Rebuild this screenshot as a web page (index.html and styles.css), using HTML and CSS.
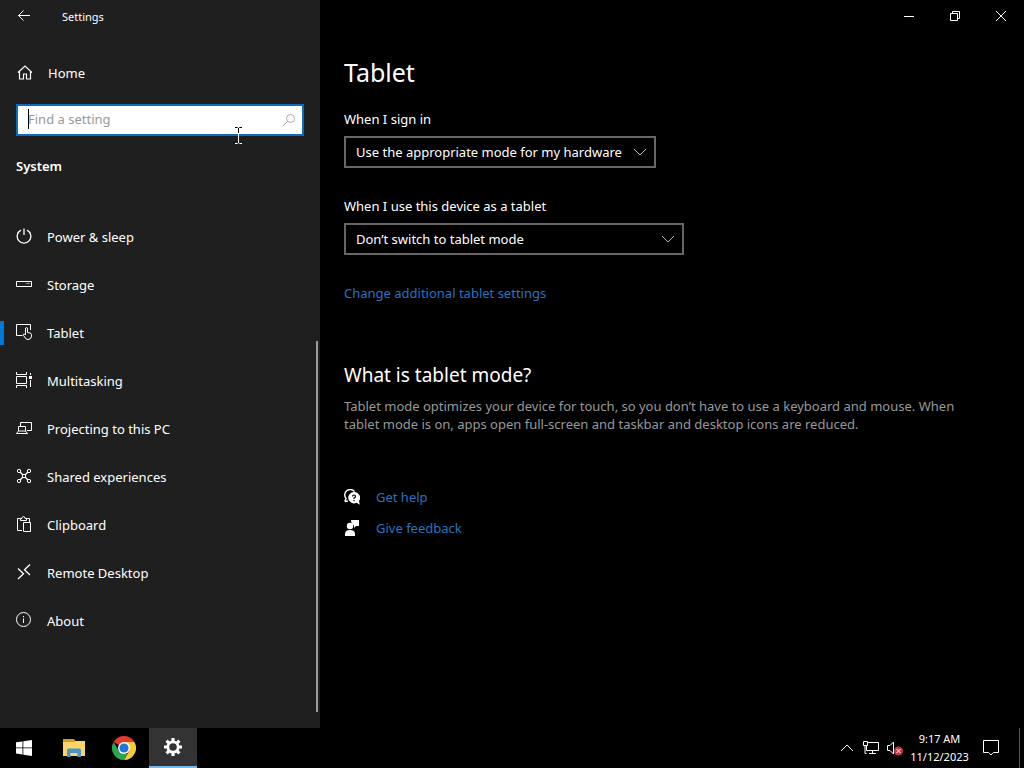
FILE: index.html
```html
<!DOCTYPE html>
<html lang="en">
<head>
    <meta charset="UTF-8">
    <meta name="viewport" content="width=device-width, initial-scale=1.0">
    <title>Settings</title>
    <link rel="stylesheet" href="styles.css">
</head>
<body>
    <div class="window">
        <aside class="sidebar">
            <header class="titlebar">
                <button class="back" aria-label="Back">
                    <svg class="icon" viewBox="0 0 16 16"><path d="M14 7.5H2.5M7.5 2.5l-5 5 5 5"/></svg>
                </button>
                <span class="app-name">Settings</span>
            </header>
            <a class="nav-item home" href="#">
                <svg class="icon" viewBox="0 0 16 16"><path d="M2 8.500l7-6.500 7 6.500M3.500 7v8h4v-5h3v5h4V7" stroke-width="1.200"/></svg>
                Home
            </a>
            <div class="search">
                <span class="caret"></span>
                <input type="text" placeholder="Find a setting" aria-label="Find a setting">
                <svg class="icon search-icon" viewBox="0 0 16 16"><circle cx="9.5" cy="6.5" r="4"/><path d="M6.5 9.5L2 14"/></svg>
                <svg class="pointer" viewBox="0 0 9 17"><path d="M1 .5h2.5l1 1 1-1H8M4.5 1v15M1 16.5h2.5l1-1 1 1H8" stroke="#fff"/><path d="M1 .5h2.5l1 1 1-1H8M4.5 1v5" stroke="#000"/></svg>
            </div>
            <h2 class="section">System</h2>
            <nav>
                <a class="nav-item" href="#">
                    <svg class="icon" viewBox="0 0 16 16"><path d="M5 2.2a6.8 6.8 0 1 0 6 0M8 .5V7" stroke-width="1.3"/></svg>
                    Power &amp; sleep
                </a>
                <a class="nav-item" href="#">
                    <svg class="icon" viewBox="0 0 16 16"><path d="M.5 5.5h15v5H.5zM10.500 7.5h1M12.500 7.5h1"/></svg>
                    Storage
                </a>
                <a class="nav-item active" href="#">
                    <svg class="icon" viewBox="0 0 16 16"><path d="M6.5 11.5h-6v-11h14V6M9.5 11V5q0-1.500 1-1.500t1 1.500v3.500l2.500.5q1.500.3 1.500 1.700V12q0 3.500-3.500 3.500-2 0-2.700-1.500L7.500 11.500q-.5-1.500.5-1.500.8 0 1.500 1"/></svg>
                    Tablet
                </a>
                <a class="nav-item" href="#">
                    <svg class="icon" viewBox="0 0 16 16"><path d="M.5 0v2.500h10V0M.5 4.5h10v7H.5zM.5 16v-2.500h10V16M14.500 1v2M14.500 8v7"/><rect class="solid" x="13" y="4" width="3" height="3"/></svg>
                    Multitasking
                </a>
                <a class="nav-item" href="#">
                    <svg class="icon" viewBox="0 0 16 16"><path d="M4.500 6V2.500h11v8H11M2.500 11V6.500h7V11M.5 13.500L2.500 11h7l2 2.500z"/></svg>
                    Projecting to this PC
                </a>
                <a class="nav-item" href="#">
                    <svg class="icon" viewBox="0 0 16 16"><path d="M4 4l8 8M12 4l-8 8" stroke-width="1.400"/><circle class="hub" cx="8" cy="8" r="1.700"/><circle class="hub" cx="3" cy="3" r="1.700"/><circle class="hub" cx="13" cy="3" r="1.700"/><circle class="hub" cx="3" cy="13" r="1.700"/><circle class="hub" cx="13" cy="13" r="1.700"/></svg>
                    Shared experiences
                </a>
                <a class="nav-item" href="#">
                    <svg class="icon" viewBox="0 0 16 16"><path d="M6 14.500H1.500v-12h3M10.500 2.500h3V6M4.500 4.500v-2H6Q6 .5 7.500.5T9 2.500h1.500v2zM7.500 6.500h7v9h-7z"/></svg>
                    Clipboard
                </a>
                <a class="nav-item" href="#">
                    <svg class="icon" viewBox="0 0 16 16"><path d="M2 4.500l5.500 5.200L2 15M14 .5L8.500 5.700 14 11" stroke-width="1.300"/></svg>
                    Remote Desktop
                </a>
                <a class="nav-item" href="#">
                    <svg class="icon" viewBox="0 0 16 16"><circle cx="7.500" cy="7.500" r="7"/><path d="M7.500 6.500V11M7.500 4v1.200"/></svg>
                    About
                </a>
            </nav>
            <div class="scroll-thumb"></div>
        </aside>

        <div class="content">
            <div class="window-controls">
                <button aria-label="Minimize"><svg viewBox="0 0 10 10"><path d="M0 5.500h10"/></svg></button>
                <button aria-label="Restore"><svg viewBox="0 0 10 10"><path d="M.5 2.500h7v7h-7zM2.500 2V.5h7v7H8"/></svg></button>
                <button aria-label="Close"><svg viewBox="0 0 10 10"><path d="M0 0l10 10M10 0L0 10"/></svg></button>
            </div>
            <main>
                <h1>Tablet</h1>
                <div class="field">
                    <label for="sign-in">When I sign in</label>
                    <div class="select-box">
                        <select id="sign-in">
                            <option>Use the appropriate mode for my hardware</option>
                            <option>Always use tablet mode</option>
                            <option>Never use tablet mode</option>
                        </select>
                        <svg viewBox="0 0 12 8"><path d="M0 1l6 6 6-6"/></svg>
                    </div>
                </div>
                <div class="field">
                    <label for="as-tablet">When I use this device as a tablet</label>
                    <div class="select-box wide">
                        <select id="as-tablet">
                            <option>Don’t switch to tablet mode</option>
                            <option>Always switch to tablet mode</option>
                            <option>Ask me before switching modes</option>
                        </select>
                        <svg viewBox="0 0 12 8"><path d="M0 1l6 6 6-6"/></svg>
                    </div>
                </div>
                <a class="link" href="#">Change additional tablet settings</a>
                <section class="about">
                    <h2>What is tablet mode?</h2>
                    <p>Tablet mode optimizes your device for touch, so you don’t have to use a keyboard and mouse. When tablet mode is on, apps open full-screen and taskbar and desktop icons are reduced.</p>
                </section>
                <ul class="support">
                    <li>
                        <svg class="icon" viewBox="0 0 16 16"><path d="M.8 12.500L2 9.500A5 5 0 1 1 10.500 2.500M.8 12.500l3.200-.5" stroke-width="1.400"/><path class="solid" d="M10 3a5.700 5.700 0 1 0 2.500 10.800l3.300 2-.8-3.800A5.700 5.700 0 0 0 10 3z"/><path d="M8.500 7.500Q8.500 6 10 6t1.500 1.300T10 9v1M10 11v1.200" stroke="#000" stroke-width="1.200"/></svg>
                        <a class="link" href="#">Get help</a>
                    </li>
                    <li>
                        <svg class="icon" viewBox="0 0 16 16"><circle class="solid" cx="6" cy="6" r="3.200"/><path class="solid" d="M1 16v-2q0-4 5-4t5 4v2zM7 0h8v6h-3l-2 2V5.500L7.500 3z"/></svg>
                        <a class="link" href="#">Give feedback</a>
                    </li>
                </ul>
            </main>
        </div>
    </div>

    <footer class="taskbar">
        <button class="task" aria-label="Start">
            <svg width="16" height="16" viewBox="0 0 16 16"><path fill="#fff" d="M0 2.300L6.500 1.400v6.100H0zM7.300 1.300L16 0v7.500H7.300zM0 8.300h6.500v6.200L0 13.600zM7.300 8.300H16V16l-8.700-1.300z"/></svg>
        </button>
        <button class="task" aria-label="File Explorer">
            <svg width="22" height="18" viewBox="0 0 22 18"><path fill="#d89a25" d="M0 0h11l1.500 2H22v4H0z"/><path fill="#fbd568" d="M0 3h11l1.500-1H22v15H0z"/><path fill="#4a93c4" d="M4 18v-7q0-1.500 1.500-1.500h11Q18 9.500 18 11v7h-3.500v-4h-7v4z"/></svg>
        </button>
        <button class="task" aria-label="Google Chrome">
            <svg width="24" height="24" viewBox="0 0 24 24"><path fill="#e33b2e" d="M12 12L1.600 6A12 12 0 0 1 22.400 6z"/><path fill="#fcc934" d="M12 6h10.400A12 12 0 0 1 12 24l5.200-9z"/><path fill="#2da44e" d="M1.600 6l5.200 9L12 18l3.500-.5L12 24A12 12 0 0 1 1.600 6z"/><circle cx="12" cy="12" r="6" fill="#fff"/><circle cx="12" cy="12" r="4.600" fill="#2374e1"/></svg>
        </button>
        <button class="task current" aria-label="Settings">
            <svg width="18" height="18" viewBox="0 0 18 18"><circle cx="9" cy="9" r="5.200" fill="none" stroke="#fff" stroke-width="2.800"/><path d="M9 0v3M9 15v3M0 9h3M15 9h3M2.600 2.600l2.200 2.200M13.200 13.200l2.200 2.200M2.600 15.400l2.200-2.200M13.200 4.800l2.200-2.200" stroke="#fff" stroke-width="3.200"/></svg>
        </button>
        <div class="tray">
            <button aria-label="Show hidden icons"><svg class="chevron" viewBox="0 0 12 8"><path d="M0 7l6-6 6 6"/></svg></button>
            <button aria-label="Network"><svg class="icon" viewBox="0 0 16 16"><path d="M5 2.500h10.500v8h-12V6M9.500 10.500v3M6 13.500h7M.5 1.500h4v4h-4zM2 5.500v8h1.500"/></svg></button>
            <button aria-label="Volume muted"><svg class="icon" viewBox="0 0 16 16"><path d="M.5 5.500H3L6.500 2v12L3 10.500H.5z"/><circle cx="11.500" cy="11" r="4.500" fill="#c93442" stroke="none"/><path d="M9.500 9l4 4M13.500 9l-4 4"/></svg></button>
            <div class="clock"><span>9:17 AM</span><span>11/12/2023</span></div>
            <button class="notify" aria-label="Notifications"><svg class="icon" viewBox="0 0 16 16"><path d="M.5 .5h15v12h-5L8 15l-2.500-2.500h-5z"/></svg></button>
            <button class="show-desktop" aria-label="Show desktop"></button>
        </div>
    </footer>
</body>
</html>
```
FILE: styles.css
```css
* {
    box-sizing: border-box;
}
body {
    display: flex;
    flex-direction: column;
    min-height: 100vh;
    margin: 0;
    background: #000;
    color: #fff;
    font-family: "Segoe UI", "Noto Sans", "Open Sans", sans-serif;
    font-size: 13px;
    line-height: 18px;
}
button {
    display: flex;
    align-items: center;
    justify-content: center;
    padding: 0;
    border: 0;
    background: none;
    color: inherit;
}
a {
    color: inherit;
    text-decoration: none;
}
svg {
    flex: none;
    fill: none;
    stroke-width: 1;
}
h1, h2, p, ul {
    margin: 0;
    padding: 0;
    font-weight: normal;
}
.icon {
    width: 16px;
    height: 16px;
    stroke: #fff;
}
.solid {
    fill: #fff;
    stroke: none;
}
.window {
    display: flex;
    flex: 1;
}

/* sidebar */
.sidebar {
    position: relative;
    flex: none;
    width: 320px;
    background: #1f1f1f;
}
.titlebar {
    display: flex;
    align-items: center;
    height: 32px;
    font-size: 11px;
}
.back {
    width: 48px;
    height: 32px;
}
.app-name {
    padding: 2px 0 0 14px;
}
.nav-item {
    display: flex;
    align-items: center;
    gap: 15px;
    height: 48px;
    padding: 0 16px;
}
.nav-item .icon {
    margin-bottom: 2px;
}
.home {
    gap: 16px;
    margin: 17px 0 7px;
}
.nav-item.active {
    background: linear-gradient(#0078d7, #0078d7) left center / 4px 24px no-repeat;
}
.hub {
    fill: #1f1f1f;
}
.search {
    position: relative;
    display: flex;
    align-items: center;
    height: 32px;
    margin: 0 16px;
    padding: 0 5px 0 10px;
    border: 2px solid #0f6cbd;
    background: #fff;
}
.search input {
    flex: 1;
    min-width: 0;
    padding: 0 0 2px;
    border: 0;
    outline: 0;
    background: none;
    color: #000;
    font: inherit;
}
.search input::placeholder {
    color: #999;
    opacity: 1;
}
.search-icon {
    stroke: #aaa;
}
.caret {
    position: absolute;
    top: 3px;
    left: 10px;
    width: 1px;
    height: 20px;
    background: #000;
}
.pointer {
    position: absolute;
    top: 21px;
    right: 59px;
    width: 9px;
    height: 17px;
}
.section {
    margin: 21px 16px 38px;
    font-size: 13px;
    font-weight: 600;
}
.scroll-thumb {
    position: absolute;
    right: 2px;
    bottom: 16px;
    width: 2px;
    height: 51%;
    background: #9a9a9a;
}

/* content */
.content {
    flex: 1;
    min-width: 0;
}
.window-controls {
    display: flex;
    justify-content: flex-end;
}
.window-controls button {
    width: 46px;
    height: 32px;
}
.window-controls svg {
    width: 10px;
    height: 10px;
    stroke: #fff;
}
main {
    padding: 22px 24px;
}
h1 {
    margin-bottom: 20px;
    font-size: 25px;
    line-height: 36px;
}
.field {
    display: flex;
    flex-direction: column;
    align-items: flex-start;
    gap: 8px;
    margin-bottom: 29px;
}
.select-box {
    position: relative;
    width: 312px;
    max-width: 100%;
}
.select-box.wide {
    width: 340px;
}
.select-box select {
    width: 100%;
    height: 32px;
    padding: 0 32px 0 10px;
    border: 2px solid #666;
    border-radius: 0;
    appearance: none;
    background: #000;
    color: #fff;
    font: inherit;
}
.select-box svg {
    position: absolute;
    top: 12px;
    right: 10px;
    width: 12px;
    height: 8px;
    stroke: #bbb;
    pointer-events: none;
}
.link {
    color: #2a73c0;
}
.about {
    margin: 59px 0 55px;
}
.about h2 {
    margin-bottom: 8px;
    font-size: 19px;
    line-height: 28px;
}
.about p {
    max-width: 632px;
    color: #999;
}
.support {
    list-style: none;
}
.support li {
    display: flex;
    align-items: center;
    gap: 16px;
    margin-bottom: 13px;
}

/* taskbar */
.taskbar {
    display: flex;
    height: 40px;
    background: #000;
}
.task {
    width: 48px;
    margin-right: 2px;
}
.task.current {
    margin-left: -1px;
    border-bottom: 2px solid #76b9ed;
    background: #333;
}
.tray {
    display: flex;
    align-items: center;
    margin-left: auto;
    font-size: 11px;
}
.tray button {
    width: 24px;
    height: 40px;
}
.chevron {
    width: 12px;
    height: 8px;
    stroke: #fff;
}
.clock {
    display: flex;
    flex-direction: column;
    width: 65px;
    text-align: center;
}
.tray .notify {
    width: 47px;
    padding-right: 9px;
}
.tray .show-desktop {
    width: 5px;
    border-left: 1px solid #555;
}
```
